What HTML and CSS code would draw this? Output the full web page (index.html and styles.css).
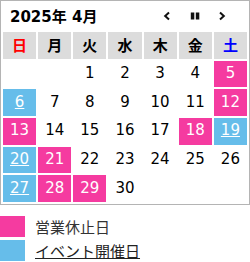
FILE: index.html
```html
<!DOCTYPE html>
<html lang="ja">
<head>
<meta charset="utf-8">
<title>カレンダー</title>
<link rel="stylesheet" href="styles.css">
</head>
<body>
<div class="cal">
  <div class="cal-head">
    <span class="cal-title">2025年 4月</span>
    <div class="nav">
      <button class="nav-btn" aria-label="前の月"><svg width="10" height="10" viewBox="0 0 10 10"><path d="M7 1.6 L3.2 5 L7 8.4" fill="none" stroke="#111" stroke-width="2"/></svg></button>
      <button class="nav-btn" aria-label="一時停止"><svg width="10" height="10" viewBox="0 0 10 10"><rect x="0.8" y="1.5" width="3.5" height="7" fill="#111"/><rect x="5.8" y="1.5" width="3.5" height="7" fill="#111"/></svg></button>
      <button class="nav-btn" aria-label="次の月"><svg width="10" height="10" viewBox="0 0 10 10"><path d="M3 1.6 L6.8 5 L3 8.4" fill="none" stroke="#111" stroke-width="2"/></svg></button>
    </div>
  </div>
  <div class="grid">
    <div class="dow sun">日</div>
    <div class="dow">月</div>
    <div class="dow">火</div>
    <div class="dow">水</div>
    <div class="dow">木</div>
    <div class="dow">金</div>
    <div class="dow sat">土</div>

    <div class="day"></div>
    <div class="day"></div>
    <div class="day">1</div>
    <div class="day">2</div>
    <div class="day">3</div>
    <div class="day">4</div>
    <div class="day closed">5</div>

    <div class="day event"><a href="#">6</a></div>
    <div class="day">7</div>
    <div class="day">8</div>
    <div class="day">9</div>
    <div class="day">10</div>
    <div class="day">11</div>
    <div class="day closed">12</div>

    <div class="day closed">13</div>
    <div class="day">14</div>
    <div class="day">15</div>
    <div class="day">16</div>
    <div class="day">17</div>
    <div class="day closed">18</div>
    <div class="day event"><a href="#">19</a></div>

    <div class="day event"><a href="#">20</a></div>
    <div class="day closed">21</div>
    <div class="day">22</div>
    <div class="day">23</div>
    <div class="day">24</div>
    <div class="day">25</div>
    <div class="day">26</div>

    <div class="day event"><a href="#">27</a></div>
    <div class="day closed">28</div>
    <div class="day closed">29</div>
    <div class="day">30</div>
    <div class="day"></div>
    <div class="day"></div>
    <div class="day"></div>
  </div>
</div>
<ul class="legend">
  <li class="legend-item"><span class="swatch closed"></span><span>営業休止日</span></li>
  <li class="legend-item"><span class="swatch event"></span><a href="#" class="legend-link">イベント開催日</a></li>
</ul>
</body>
</html>
```

FILE: styles.css
```css
* { box-sizing: border-box; }
html, body {
  margin: 0;
  padding: 0;
  background: #fff;
}
body {
  font-family: "DejaVu Sans", "Noto Sans CJK JP", sans-serif;
  font-size: 15px;
  color: #000;
}
.cal {
  width: 250px;
  border: 1px solid #b4b4b4;
}
.cal-head {
  height: 29px;
  display: flex;
  align-items: center;
  padding-left: 9px;
  padding-bottom: 1px;
}
.cal-title {
  font-weight: bold;
}
.nav {
  margin-left: auto;
  display: flex;
  padding-right: 13px;
  margin-top: 2px;
}
.nav-btn {
  width: 27.5px;
  height: 12px;
  padding: 0;
  border: 0;
  background: none;
  display: flex;
  align-items: center;
  justify-content: center;
}
.nav-btn svg { display: block; }
.grid {
  display: grid;
  grid-template-columns: repeat(7, 1fr);
  grid-auto-rows: 26.7px;
  gap: 2px;
  padding: 2px;
}
.dow, .day {
  display: flex;
  align-items: center;
  justify-content: center;
  padding-bottom: 2px;
}
.dow {
  background: #dcdcdc;
  font-weight: bold;
}
.dow.sun { color: #ff0000; }
.dow.sat { color: #0000ff; }
.day.closed { background: #f53ba0; color: #fff; }
.day.event { background: #66bdea; }
.day.event a {
  color: #fff;
  text-decoration: underline;
}
.legend {
  list-style: none;
  margin: 11px 0 0;
  padding: 0;
  display: flex;
  flex-direction: column;
  gap: 3px;
}
.legend-item {
  display: flex;
  align-items: center;
  height: 21px;
  color: #333;
}
.swatch {
  width: 25px;
  height: 21px;
  margin-right: 10px;
}
.swatch.closed { background: #f53ba0; }
.swatch.event { background: #66bdea; }
.legend-link {
  color: #222;
  text-decoration: underline;
}
```
